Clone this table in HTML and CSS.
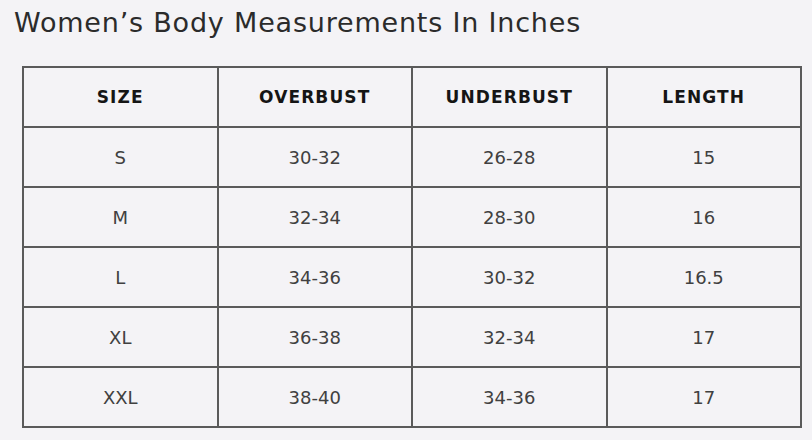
FILE: index.html
```html
<!DOCTYPE html>
<html lang="en">
<head>
<meta charset="utf-8">
<title>Women's Body Measurements In Inches</title>
<link rel="stylesheet" href="styles.css">
</head>
<body>
<main class="page">
  <h1 class="title">Women’s Body Measurements In Inches</h1>
  <table class="chart">
    <thead>
      <tr><th>SIZE</th><th>OVERBUST</th><th>UNDERBUST</th><th>LENGTH</th></tr>
    </thead>
    <tbody>
      <tr><td>S</td><td>30-32</td><td>26-28</td><td>15</td></tr>
      <tr><td>M</td><td>32-34</td><td>28-30</td><td>16</td></tr>
      <tr><td>L</td><td>34-36</td><td>30-32</td><td>16.5</td></tr>
      <tr><td>XL</td><td>36-38</td><td>32-34</td><td>17</td></tr>
      <tr><td>XXL</td><td>38-40</td><td>34-36</td><td>17</td></tr>
    </tbody>
  </table>
</main>
</body>
</html>
```
FILE: styles.css
```css
html, body {
  margin: 0;
  padding: 0;
  background: #f4f3f6;
}
.page {
  padding: 5px 0 0 14px;
  font-family: "DejaVu Sans", "Open Sans", sans-serif;
}
.title {
  margin: 0;
  font-size: 27px;
  line-height: 36px;
  font-weight: 400;
  color: #2b2b2b;
  letter-spacing: 0.8px;
}
.chart {
  margin: 25px 0 0 8px;
  width: 780px;
  border-collapse: collapse;
  table-layout: fixed;
}
.chart th,
.chart td {
  border: 2px solid #5a5a5a;
  height: 58px;
  padding: 0;
  text-align: center;
  vertical-align: middle;
}
.chart th {
  font-size: 17px;
  font-weight: 700;
  color: #151515;
  letter-spacing: 1.1px;
}
.chart td {
  font-size: 18px;
  font-weight: 400;
  color: #404040;
}
```
